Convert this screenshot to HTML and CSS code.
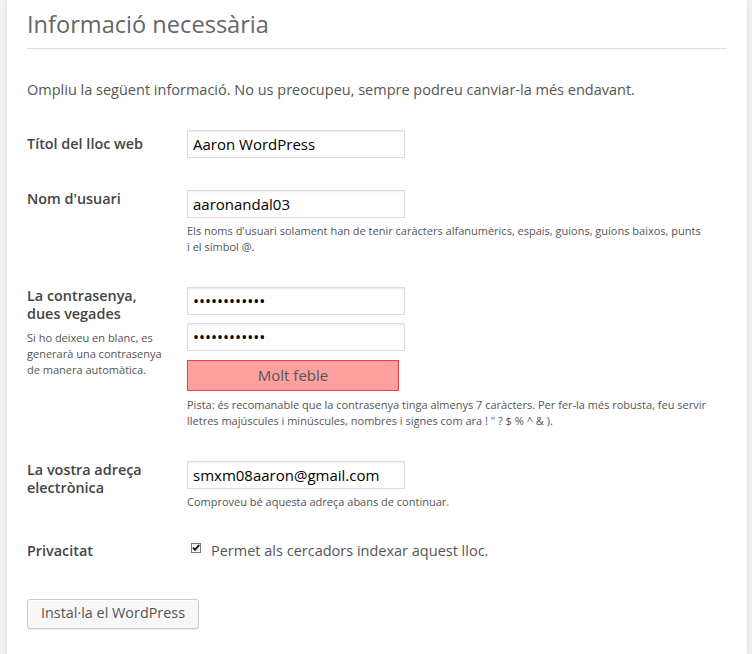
FILE: index.html
```html
<!DOCTYPE html>
<html lang="ca">
<head>
<meta charset="utf-8">
<title>Instal·lació del WordPress</title>
<link rel="stylesheet" href="styles.css">
</head>
<body>
<div class="panel">
  <h1 class="title">Informació necessària</h1>
  <p class="intro">Ompliu la següent informació. No us preocupeu, sempre podreu canviar-la més endavant.</p>
  <form class="form">
    <div class="row row-center">
      <label class="label" for="weblog_title">Títol del lloc web</label>
      <div class="field">
        <input class="input" id="weblog_title" type="text" value="Aaron WordPress">
      </div>
    </div>
    <div class="row">
      <label class="label" for="user_login">Nom d'usuari</label>
      <div class="field">
        <input class="input" id="user_login" type="text" value="aaronandal03">
        <p class="desc">Els noms d'usuari solament han de tenir caràcters alfanumèrics, espais, guions, guions baixos, punts i&nbsp;el símbol @.</p>
      </div>
    </div>
    <div class="row">
      <div class="label">
        <label for="pass1">La contrasenya, dues vegades</label>
        <p class="label-note">Si ho deixeu en blanc, es generarà una contrasenya de manera automàtica.</p>
      </div>
      <div class="field">
        <input class="input input-pass" id="pass1" type="password" value="aaaaaaaaaaaa">
        <input class="input input-pass input-second" id="pass2" type="password" value="aaaaaaaaaaaa">
        <div class="strength">Molt feble</div>
        <p class="desc desc-hint">Pista: és recomanable que la contrasenya tinga almenys 7 caràcters. Per fer-la més robusta, feu servir lletres majúscules i minúscules, nombres i signes com ara ! " ? $ % ^ &amp; ).</p>
      </div>
    </div>
    <div class="row">
      <label class="label" for="admin_email">La vostra adreça electrònica</label>
      <div class="field">
        <input class="input" id="admin_email" type="text" value="smxm08aaron@gmail.com">
        <p class="desc">Comproveu bé aquesta adreça abans de continuar.</p>
      </div>
    </div>
    <div class="row">
      <div class="label">Privacitat</div>
      <div class="field">
        <label class="check">
          <svg class="check-box" width="10" height="10" viewBox="0 0 10 10" aria-hidden="true">
            <rect x="0.5" y="0.5" width="9" height="9" fill="#fff" stroke="#7a7a7a"/>
            <path d="M2 4.6 L4 6.8 L8.2 1.8" fill="none" stroke="#111" stroke-width="1.8"/>
          </svg>
          <span>Permet als cercadors indexar aquest lloc.</span>
        </label>
      </div>
    </div>
    <div class="actions">
      <button class="button" type="button">Instal·la el WordPress</button>
    </div>
  </form>
</div>
</body>
</html>
```
FILE: styles.css
```css
html, body {
  margin: 0;
  padding: 0;
}

body {
  background: #f1f1f1;
  font-family: "Open Sans", "Liberation Sans", sans-serif;
  font-feature-settings: "locl" 0;
  color: #444;
  font-size: 14.5px;
}

.panel {
  box-sizing: border-box;
  width: 740px;
  min-height: 654px;
  margin-left: 7px;
  padding: 0 20px;
  background: #fff;
  box-shadow: 0 1px 3px rgba(0, 0, 0, 0.13);
}

.title {
  margin: 0;
  padding: 8px 0 7px;
  font-size: 23.6px;
  line-height: 33px;
  font-weight: normal;
  color: #666;
  border-bottom: 1px solid #dedede;
}

.intro {
  margin: 30px 0 0;
  font-size: 14.5px;
  line-height: 21px;
  color: #555;
}

.form {
  display: flex;
  flex-direction: column;
  gap: 32px;
  margin-top: 30px;
}

.row {
  display: flex;
  align-items: flex-start;
}

.row-center {
  align-items: center;
}

.label {
  box-sizing: border-box;
  width: 160px;
  flex: none;
  padding-right: 20px;
  font-weight: 600;
  font-size: 14.4px;
  line-height: 18px;
  color: #444;
}

.label-note {
  margin: 7px 0 0;
  font-weight: normal;
  font-size: 11px;
  line-height: 16px;
  color: #555;
}

.field {
  width: 520px;
  display: flex;
  flex-direction: column;
  align-items: flex-start;
}

.input {
  box-sizing: border-box;
  width: 218px;
  height: 28px;
  margin: 0;
  padding: 3px 5px;
  border: 1px solid #ddd;
  box-shadow: inset 0 1px 2px rgba(0, 0, 0, 0.07);
  font-family: "Open Sans", "Liberation Sans", sans-serif;
  font-size: 15px;
  line-height: 20px;
  color: #000;
  background: #fff;
  outline: none;
}

.input-pass {
  font-size: 16px;
  letter-spacing: 0;
}

.input-second {
  margin-top: 8px;
}

.strength {
  box-sizing: border-box;
  width: 212px;
  height: 31px;
  margin-top: 9px;
  border: 1px solid #f04040;
  background: #ffa0a0;
  color: #555;
  font-size: 15px;
  line-height: 29px;
  text-align: center;
}

.desc {
  margin: 5px 0 0;
  font-size: 11px;
  line-height: 16px;
  color: #555;
}

.desc-hint {
  margin-top: 6px;
}

.check {
  display: flex;
  align-items: flex-start;
  gap: 10px;
  padding-left: 4px;
  font-size: 14.5px;
  line-height: 18px;
  color: #555;
}

.check-box {
  display: block;
  flex: none;
  margin-top: 1px;
}

.actions {
  margin-top: 7px;
}

.button {
  box-sizing: border-box;
  height: 30px;
  padding: 0 13px 2px;
  border: 1px solid #ccc;
  border-radius: 3px;
  background: #f7f7f7;
  box-shadow: inset 0 1px 0 #fff, 0 1px 0 rgba(0, 0, 0, 0.08);
  font-family: "Open Sans", "Liberation Sans", sans-serif;
  font-feature-settings: "locl" 0;
  font-size: 14.4px;
  line-height: 26px;
  color: #555;
  cursor: pointer;
}
```
